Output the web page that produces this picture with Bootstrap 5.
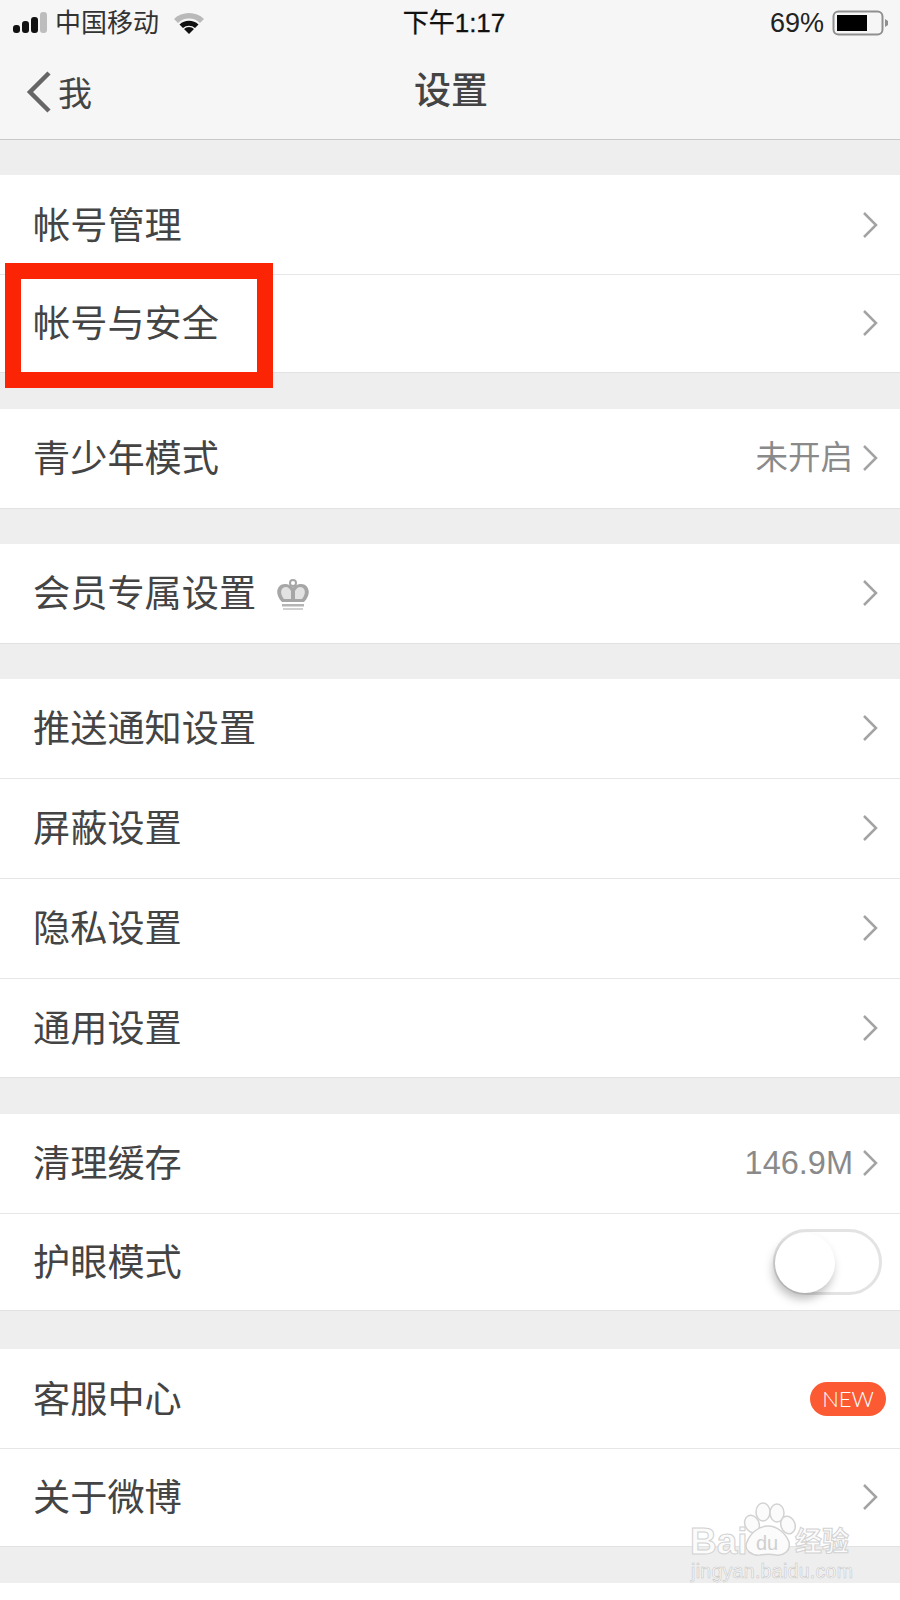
<!DOCTYPE html>
<html lang="zh-CN">
<head>
  <meta charset="UTF-8">
  <title>设置</title>
  <link rel="stylesheet" href="https://cdn.jsdelivr.net/npm/bootstrap@5.3.2/dist/css/bootstrap.min.css">
  <style>
    body { background: #eeeeee; font-family: "Liberation Sans", "Noto Sans CJK SC", sans-serif; color: #444; height: 1600px; overflow: hidden; }
    .phone { position: relative; width: 900px; height: 1600px; overflow: hidden; background: #eeeeee; }
    .topbar { height: 140px; background: #f6f6f6; border-bottom: 1px solid #c9c9c9; }
    .status { height: 46px; color: #111; font-size: 26px; padding: 0 12px 0 13px; position: relative; }
    .status-left { gap: 6px; }
    .carrier { color: #333; font-size: 26px; }
    .clock { position: absolute; left: 0; right: 0; top: 0; height: 46px; line-height: 46px; text-align: center; padding-left: 8px; font-size: 26px; -webkit-text-stroke: .3px #111; }
    .battery-text { font-size: 27px; color: #222; }
    .titlebar { height: 93px; position: relative; padding-left: 26px; padding-bottom: 2px; }
    .back-label { font-size: 34px; color: #444; margin-left: 6px; padding-top: 6px; }
    .page-title { position: absolute; left: 0; right: 0; top: 0; bottom: 0; margin: 0; font-size: 37px; font-weight: 500; color: #444; display: flex; align-items: center; justify-content: center; padding-left: 2px; }
    .group-list { border-radius: 0; margin-top: 35px; }
    .group-list.gap-wide { margin-top: 36px; }
    .group-list.gap-widest { margin-top: 38px; }
    .set-row { height: 100px; padding: 0 22px 0 33px; font-size: 37.200px; color: #444; border-color: #e6e6e6; }
    .set-row:last-child:not(:first-child) { height: 97.500px; }
    .group-tall .set-row { height: 100px; }
    .group-tall .set-row:last-child { height: 99px; }
    .set-row:last-child { border-bottom: 1px solid #e2e2e2 !important; }
    .row-label { padding-top: 4px; }
    .side-val { font-size: 32.500px; color: #8a8a8a; margin-right: 9px; }
    .crown { margin-left: 20px; margin-top: 3px; }
    .toggle-track { width: 109px; height: 66px; border: 3px solid #e3e3e3; border-radius: 33px; position: relative; margin-right: -4px; }
    .toggle-knob { position: absolute; left: -1px; top: 1px; width: 60px; height: 60px; border-radius: 50%; background: #fff; box-shadow: -2px 6px 10px rgba(0,0,0,.26); }
    .new-tag { background: #fb5a32; color: #fff; width: 76px; height: 34px; border-radius: 17px; font-family: Lato, sans-serif; font-weight: 300; font-size: 22px; margin-right: -8px; }
    .red-mark { position: absolute; left: 5px; top: 263px; width: 268px; height: 125px; border: 16.500px solid #fb2405; }
    .watermark { position: absolute; left: 688px; top: 1500px; width: 170px; height: 84px; color: #fbfbfb; }
    .wm-logo { position: absolute; left: 0; top: 0; }
    .wm-big { position: absolute; left: 2px; top: 22px; font-size: 37px; line-height: 40px; font-weight: 700; -webkit-text-stroke: 1px #d2d2d2; }
    .wm-du { position: absolute; left: 68px; top: 33px; font-size: 20px; line-height: 20px; color: #cfcfcf; }
    .wm-cn { position: absolute; left: 107px; top: 26px; font-size: 27px; line-height: 32px; font-weight: 700; -webkit-text-stroke: 1px #d2d2d2; letter-spacing: 0; }
    .wm-url { position: absolute; left: 3px; top: 59px; font-size: 19.500px; line-height: 24px; letter-spacing: .3px; -webkit-text-stroke: .6px #c9c9c9; white-space: nowrap; }
  </style>
</head>
<body>

<div class="phone">
  <div class="topbar">
    <div class="status d-flex align-items-center justify-content-between">
      <div class="status-left d-flex align-items-center">
        <svg width="36" height="24" viewBox="0 0 36 24">
          <rect x="0" y="14" width="7" height="8" rx="3" fill="#111"/>
          <rect x="9" y="10" width="7" height="12" rx="3" fill="#111"/>
          <rect x="18" y="6" width="7" height="16" rx="3" fill="#111"/>
          <rect x="27" y="1" width="7" height="21" rx="3" fill="#bdbdbd"/>
        </svg>
        <span class="carrier">中国移动</span>
        <svg class="ms-2" width="32" height="24" viewBox="0 0 32 24">
          <path d="M1 8 A22 22 0 0 1 31 8 L27 12 A16 16 0 0 0 5 12 Z" fill="#b9b9b9"/>
          <path d="M6.500 13.500 A14 14 0 0 1 25.500 13.500 L22 17 A9 9 0 0 0 10 17 Z" fill="#111"/>
          <path d="M11 18 A7 7 0 0 1 21 18 L16 23 Z" fill="#111"/>
        </svg>
      </div>
      <div class="clock">下午1:17</div>
      <div class="d-flex align-items-center gap-1">
        <span class="battery-text me-1">69%</span>
        <svg width="56" height="26" viewBox="0 0 56 26">
          <rect x="1.500" y="1.500" width="49" height="23" rx="5" fill="none" stroke="#8f8f8f" stroke-width="2"/>
          <rect x="5" y="5" width="30" height="16" fill="#000"/>
          <path d="M53 9 L56 11 V15 L53 17 Z" fill="#8f8f8f"/>
        </svg>
      </div>
    </div>
    <div class="titlebar d-flex align-items-center">
      <svg width="26" height="42" viewBox="0 0 26 42">
        <path d="M23 2 L4 21 L23 40" fill="none" stroke="#666" stroke-width="4.500"/>
      </svg>
      <span class="back-label">我</span>
      <h1 class="page-title">设置</h1>
    </div>
  </div>

  <div id="groups"></div>

  <div class="red-mark"></div>

  <div class="watermark">
    <svg class="wm-logo" width="170" height="60" viewBox="0 0 170 60">
      <g fill="#fbfbfb" stroke="#d2d2d2" stroke-width="1.500">
        <ellipse cx="64" cy="24" rx="7" ry="9" transform="rotate(-25 64 24)"/>
        <ellipse cx="75" cy="12" rx="7" ry="9"/>
        <ellipse cx="89" cy="13" rx="7" ry="9"/>
        <ellipse cx="100" cy="25" rx="7" ry="9" transform="rotate(-20 100 25)"/>
        <path d="M80 26 C90 26 98 34 101 42 C103 52 94 56 88 55 C82 54 78 54 72 55 C64 56 55 50 59 42 C62 34 70 26 80 26 Z"/>
      </g>
    </svg>
    <span class="wm-big">Bai</span>
    <span class="wm-du">du</span>
    <span class="wm-cn">经验</span>
    <span class="wm-url">jingyan.baidu.com</span>
  </div>
</div>

<script src="https://cdn.jsdelivr.net/npm/bootstrap@5.3.2/dist/js/bootstrap.bundle.min.js"></script>
<script>
const chevron = `<svg width="16" height="28" viewBox="0 0 16 28"><path d="M2 2 L14 14 L2 26" fill="none" stroke="#a3a3a3" stroke-width="2.500"/></svg>`;
const crown = `<svg class="crown" width="34" height="32" viewBox="0 0 34 32">
  <circle cx="17" cy="4" r="3" fill="none" stroke="#a6a6a6" stroke-width="2"/>
  <path d="M6 23 C-3 14 2 4 10 5 C13 5.500 16 7 17 8.500 C18 7 21 5.500 24 5 C32 4 37 14 28 23 Z" fill="#a6a6a6"/>
  <path d="M8 20 C3 14 5 8 10 8 C12 8 14 10 15 12 V20 Z M26 20 C31 14 29 8 24 8 C22 8 20 10 19 12 V20 Z" fill="#e2e2e2"/>
  <rect x="6" y="25" width="22" height="2.500" fill="#b5b5b5"/>
  <rect x="7" y="29" width="20" height="2" fill="#d0d0d0"/>
</svg>`;
const toggle = `<div class="toggle-track"><div class="toggle-knob"></div></div>`;
const newTag = `<span class="new-tag d-flex align-items-center justify-content-center">NEW</span>`;

const groups = [
  { rows: [{ t: '帐号管理' }, { t: '帐号与安全' }] },
  { cls: 'gap-wide', rows: [{ t: '青少年模式', v: '未开启' }] },
  { rows: [{ t: '会员专属设置', extra: crown }] },
  { cls: 'group-tall', rows: [{ t: '推送通知设置' }, { t: '屏蔽设置' }, { t: '隐私设置' }, { t: '通用设置' }] },
  { cls: 'gap-wide', rows: [{ t: '清理缓存', v: '146.9M' }, { t: '护眼模式', right: toggle }] },
  { cls: 'gap-widest', rows: [{ t: '客服中心', right: newTag }, { t: '关于微博' }] }
];

document.getElementById('groups').innerHTML = groups.map(g => `
  <div class="list-group list-group-flush group-list ${g.cls || ''}">
    ${g.rows.map(r => `
      <div class="list-group-item set-row d-flex align-items-center">
        <span class="row-label">${r.t}</span>${r.extra || ''}
        <div class="ms-auto d-flex align-items-center">
          ${r.v ? `<span class="side-val">${r.v}</span>` : ''}
          ${r.right || chevron}
        </div>
      </div>`).join('')}
  </div>`).join('') + '<div class="bg-white" style="height:40px;margin-top:36px"></div>';
</script>

</body>
</html>
